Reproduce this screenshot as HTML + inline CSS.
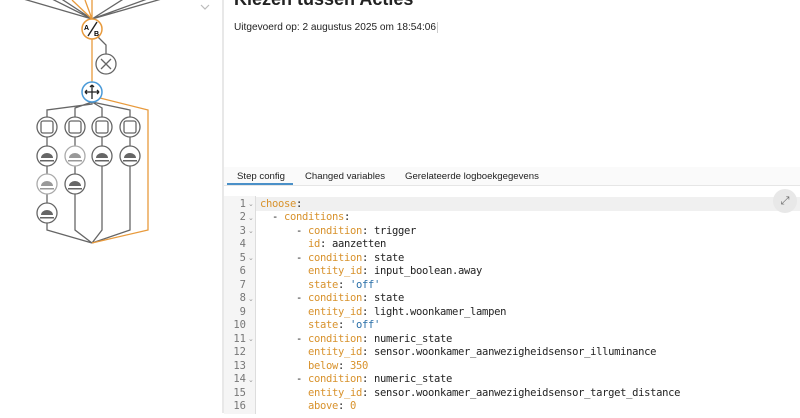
<!DOCTYPE html>
<html><head><meta charset="utf-8"><style>
body{margin:0;width:800px;height:413px;overflow:hidden;background:#fff;font-family:"Liberation Sans",sans-serif;position:relative}
.left{position:absolute;left:0;top:0;width:222px;height:413px;background:#fff}
.div{position:absolute;left:222px;top:0;width:2px;height:413px;background:#e8e8e8}
.title{position:absolute;left:234px;top:-11px;font-size:18px;font-weight:bold;color:#222}
.exec{position:absolute;left:234px;top:22px;font-size:10.1px;color:#222}
.exec span{border-right:1px solid #ccc;padding-right:1px}
.tabs{position:absolute;left:224px;top:167px;width:576px;height:18px;background:#fafafa;border-bottom:1px solid #e6e6e6;font-size:9.6px;color:#222}
.tabs div{position:absolute;top:4px}
.ul{position:absolute;left:227px;top:183px;width:66px;height:2px;background:#4a90c8}
.code{position:absolute;left:224px;top:196px;width:576px;height:218px}
.gut{position:absolute;left:0;top:0;width:31px;height:218px;background:#f5f5f5;border-right:1px solid #ddd}
.hl{position:absolute;left:32px;top:1px;width:544px;height:14px;background:#f0f0f0}
.ln{position:absolute;left:0;width:22px;text-align:right;font:10.5px "DejaVu Sans Mono",monospace;color:#777}
.fd{position:absolute;left:24px;font:7px "DejaVu Sans",sans-serif;color:#999}
.tx{position:absolute;left:36px;font:10.5px "DejaVu Sans Mono",monospace;letter-spacing:-0.32px;color:#222;white-space:pre}
.k{color:#d8922c}.s{color:#2a6fa8}
.exp{position:absolute;left:773px;top:189px;width:24px;height:24px;border-radius:50%;background:#e8e8e8;color:#666;font-size:11px;text-align:center;line-height:24px}
</style></head><body>
<div class="left">
<svg width="222" height="413" viewBox="0 0 222 413">
<g fill="none" stroke="#666" stroke-width="1.3">
<path d="M92 19 L20 -2 M92 19 L50 -2 M92 19 L60 -2 M92 19 L125 -2 M92 19 L150 -2 M92 19 L165 -2"/>
<path d="M98 37 L106 45 L106 54"/>
<path d="M92 102 L92 104 L47 110 L47 117 M92 102 L75 108 L75 117 M92 102 L102 108 L102 117 M92 102 L130 110 L130 117"/>
<path d="M47 137 L47 146 M47 166 L47 174 M47 194 L47 203 M75 137 L75 146 M75 166 L75 174 M102 137 L102 146 M130 137 L130 146"/>
<path d="M47 223 L47 230 L92 243 M75 194 L75 230 L92 243 M102 166 L102 230 L92 243 M130 166 L130 230 L92 243"/>
<circle cx="106" cy="64" r="10"/>
<path d="M101 59 L111 69 M111 59 L101 69"/>
</g>
<path d="M92 0 L92 19 M92 39 L92 82 M100 98 L148 110 L148 230 L92 243 M85 0 L92 19" fill="none" stroke="#e89a3c" stroke-width="1.3"/>
<path d="M72 0 L92 19" stroke="#e89a3c" stroke-width="1.3"/>
<circle cx="92" cy="29" r="10" fill="#fff" stroke="#e89a3c" stroke-width="1.5"/>
<text x="84" y="30" font-size="7" font-weight="bold" font-family="Liberation Sans">A</text>
<text x="94" y="36" font-size="7" font-weight="bold" font-family="Liberation Sans">B</text>
<path d="M88 36 L97 22" stroke="#222" stroke-width="1.4"/>
<circle cx="92" cy="92" r="10" fill="#fff" stroke="#4a9ad8" stroke-width="1.5"/>
<path d="M92 85 L92 99 M85 92 L99 92 M92 85 l-2 2 M92 85 l2 2 M85 92 l2 -2 M85 92 l2 2 M99 92 l-2 -2 M99 92 l-2 2" stroke="#222" stroke-width="1.3" fill="none"/>
<g fill="#fff" stroke="#666" stroke-width="1.3">
<circle cx="47" cy="127" r="10"/><circle cx="75" cy="127" r="10"/><circle cx="102" cy="127" r="10"/><circle cx="130" cy="127" r="10"/>
<rect x="41" y="121" width="12" height="12" rx="2"/><rect x="69" y="121" width="12" height="12" rx="2"/><rect x="96" y="121" width="12" height="12" rx="2"/><rect x="124" y="121" width="12" height="12" rx="2"/>
<circle cx="47" cy="156" r="10"/><circle cx="102" cy="156" r="10"/><circle cx="130" cy="156" r="10"/>
<circle cx="75" cy="184" r="10"/><circle cx="47" cy="213" r="10"/>
</g>
<g fill="#fff" stroke="#aaa" stroke-width="1.3"><circle cx="75" cy="156" r="10"/><circle cx="47" cy="184" r="10"/></g>
<g fill="#666">
<path d="M41 158 A6 5 0 0 1 53 158 Z M40 160 h14 v1.5 h-14z"/>
<path d="M96 158 A6 5 0 0 1 108 158 Z M95 160 h14 v1.5 h-14z"/>
<path d="M124 158 A6 5 0 0 1 136 158 Z M123 160 h14 v1.5 h-14z"/>
<path d="M69 186 A6 5 0 0 1 81 186 Z M68 188 h14 v1.5 h-14z"/>
<path d="M41 215 A6 5 0 0 1 53 215 Z M40 217 h14 v1.5 h-14z"/>
</g>
<g fill="#999">
<path d="M69 158 A6 5 0 0 1 81 158 Z M68 160 h14 v1.5 h-14z"/>
<path d="M41 186 A6 5 0 0 1 53 186 Z M40 188 h14 v1.5 h-14z"/>
</g>
<path d="M201 5 L205 9 L209 5" fill="none" stroke="#bbb" stroke-width="1.2"/>
</svg>
</div>
<div class="div"></div>
<div class="title">Kiezen tussen  Acties</div>
<div class="exec"><span>Uitgevoerd op: 2 augustus 2025 om 18:54:06</span></div>
<div class="tabs"><div style="left:13px">Step config</div><div style="left:81px">Changed variables</div><div style="left:181px">Gerelateerde logboekgegevens</div></div>
<div class="ul"></div>
<div class="code">
<div class="gut"></div><div class="hl"></div>
<div class="ln" style="top:1.5px">1</div><div class="fd" style="top:4px">⌄</div><div class="tx" style="top:1.5px"><span class="k">choose</span>:</div>
<div class="ln" style="top:15px">2</div><div class="fd" style="top:17.5px">⌄</div><div class="tx" style="top:15px">  - <span class="k">conditions</span>:</div>
<div class="ln" style="top:28.5px">3</div><div class="fd" style="top:31px">⌄</div><div class="tx" style="top:28.5px">      - <span class="k">condition</span>: trigger</div>
<div class="ln" style="top:42px">4</div><div class="tx" style="top:42px">        <span class="k">id</span>: aanzetten</div>
<div class="ln" style="top:55.5px">5</div><div class="fd" style="top:58px">⌄</div><div class="tx" style="top:55.5px">      - <span class="k">condition</span>: state</div>
<div class="ln" style="top:69px">6</div><div class="tx" style="top:69px">        <span class="k">entity_id</span>: input_boolean.away</div>
<div class="ln" style="top:82.5px">7</div><div class="tx" style="top:82.5px">        <span class="k">state</span>: <span class="s">'off'</span></div>
<div class="ln" style="top:96px">8</div><div class="fd" style="top:98.5px">⌄</div><div class="tx" style="top:96px">      - <span class="k">condition</span>: state</div>
<div class="ln" style="top:109.5px">9</div><div class="tx" style="top:109.5px">        <span class="k">entity_id</span>: light.woonkamer_lampen</div>
<div class="ln" style="top:123px">10</div><div class="tx" style="top:123px">        <span class="k">state</span>: <span class="s">'off'</span></div>
<div class="ln" style="top:136.5px">11</div><div class="fd" style="top:139px">⌄</div><div class="tx" style="top:136.5px">      - <span class="k">condition</span>: numeric_state</div>
<div class="ln" style="top:150px">12</div><div class="tx" style="top:150px">        <span class="k">entity_id</span>: sensor.woonkamer_aanwezigheidsensor_illuminance</div>
<div class="ln" style="top:163.5px">13</div><div class="tx" style="top:163.5px">        <span class="k">below</span>: <span class="k">350</span></div>
<div class="ln" style="top:177px">14</div><div class="fd" style="top:179.5px">⌄</div><div class="tx" style="top:177px">      - <span class="k">condition</span>: numeric_state</div>
<div class="ln" style="top:190.5px">15</div><div class="tx" style="top:190.5px">        <span class="k">entity_id</span>: sensor.woonkamer_aanwezigheidsensor_target_distance</div>
<div class="ln" style="top:204px">16</div><div class="tx" style="top:204px">        <span class="k">above</span>: <span class="k">0</span></div>
</div>
<div class="exp">⤢</div>
</body></html>
